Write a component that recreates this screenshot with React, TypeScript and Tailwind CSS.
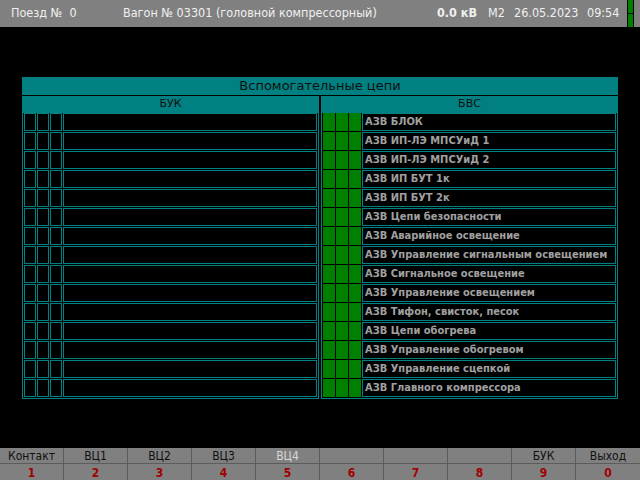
import React from "react";

const rows = [
  "АЗВ БЛОК",
  "АЗВ ИП-ЛЭ МПСУиД 1",
  "АЗВ ИП-ЛЭ МПСУиД 2",
  "АЗВ ИП БУТ 1к",
  "АЗВ ИП БУТ 2к",
  "АЗВ Цепи безопасности",
  "АЗВ Аварийное освещение",
  "АЗВ Управление сигнальным освещением",
  "АЗВ Сигнальное освещение",
  "АЗВ Управление освещением",
  "АЗВ Тифон, свисток, песок",
  "АЗВ Цепи обогрева",
  "АЗВ Управление обогревом",
  "АЗВ Управление сцепкой",
  "АЗВ Главного компрессора",
];

const keys = [
  { label: "Контакт", n: "1" },
  { label: "ВЦ1", n: "2" },
  { label: "ВЦ2", n: "3" },
  { label: "ВЦ3", n: "4" },
  { label: "ВЦ4", n: "5", off: true },
  { label: "", n: "6" },
  { label: "", n: "7" },
  { label: "", n: "8" },
  { label: "БУК", n: "9" },
  { label: "Выход", n: "0" },
];

const narrow = { fontFamily: '"DejaVu Sans Condensed", "DejaVu Sans", sans-serif' };
const wide = { fontFamily: '"DejaVu Sans", Verdana, sans-serif' };

export default function App() {
  return (
    <div className="w-[640px] h-[480px] bg-black flex flex-col overflow-hidden" style={narrow}>
      {/* Верхняя строка */}
      <div className="h-[27px] bg-[#808080] flex items-center text-[12.5px] text-[#f0f0f0] pl-[11px] whitespace-nowrap">
        <span className="w-[112px] shrink-0">Поезд №&nbsp;&nbsp;0</span>
        <span className="w-[314px] shrink-0">Вагон № 03301 (головной компрессорный)</span>
        <span className="w-[51px] shrink-0 font-bold">0.0 кВ</span>
        <span className="w-[26px] shrink-0">M2</span>
        <span className="w-[73px] shrink-0">26.05.2023</span>
        <span className="w-[40px] shrink-0">09:54</span>
        <div className="h-full w-[7px] shrink-0 flex flex-col gap-[1px] border-x border-black bg-black">
          <div className="flex-1 bg-[#008000]" />
          <div className="flex-1 bg-[#008000]" />
        </div>
      </div>

      {/* Панель */}
      <div className="flex-1 pt-[50px] pl-[22px]">
        <div className="w-[596px] flex flex-col gap-[1px]">
          <div
            className="h-[18px] bg-[#008080] flex items-center justify-center text-[13px] text-[#101010]"
            style={wide}
          >
            Вспомогательные цепи
          </div>
          <div className="flex gap-[2px]">
            {/* БУК */}
            <div className="w-[297px] flex flex-col">
              <div className="h-[17px] bg-[#008080] flex items-center justify-center text-[11px] text-[#101010]" style={wide}>
                БУК
              </div>
              <div className="border-x border-b border-[#008080] px-[1px] pb-[1px] flex flex-col gap-[1px]">
                {rows.map((_, i) => (
                  <div key={i} className="h-[18px] flex gap-[1px]">
                    <div className="w-[12px] border border-[#008080]" />
                    <div className="w-[12px] border border-[#008080]" />
                    <div className="w-[12px] border border-[#008080]" />
                    <div className="flex-1 border border-[#008080]" />
                  </div>
                ))}
              </div>
            </div>
            {/* БВС */}
            <div className="w-[297px] flex flex-col">
              <div className="h-[17px] bg-[#008080] flex items-center justify-center text-[11px] text-[#101010]" style={wide}>
                БВС
              </div>
              <div className="border-x border-b border-[#008080] px-[1px] pb-[1px] flex flex-col gap-[1px]">
                {rows.map((r) => (
                  <div key={r} className="h-[18px] flex gap-[1px]">
                    <div className="w-[12px] bg-[#008000]" />
                    <div className="w-[12px] bg-[#008000]" />
                    <div className="w-[12px] bg-[#008000]" />
                    <div className="flex-1 border border-[#008080] flex items-center pl-[2px] text-[11px] font-bold text-[#a0a0a0] whitespace-nowrap overflow-hidden">
                      {r}
                    </div>
                  </div>
                ))}
              </div>
            </div>
          </div>
        </div>
      </div>

      {/* Нижние кнопки */}
      <div className="h-[32px] bg-[#808080] grid grid-cols-10">
        {keys.map((k) => (
          <div key={k.n} className="flex flex-col border-r border-[#5c5c5c] last:border-r-0">
            <div
              className={`h-[16px] border-b border-[#5c5c5c] flex items-center justify-center text-[12px] ${
                k.off ? "text-[#d8d8d8]" : "text-[#101010]"
              }`}
            >
              {k.label}
            </div>
            <div className="flex-1 flex items-center justify-center text-[12px] font-bold text-[#a00000]">
              {k.n}
            </div>
          </div>
        ))}
      </div>
    </div>
  );
}
